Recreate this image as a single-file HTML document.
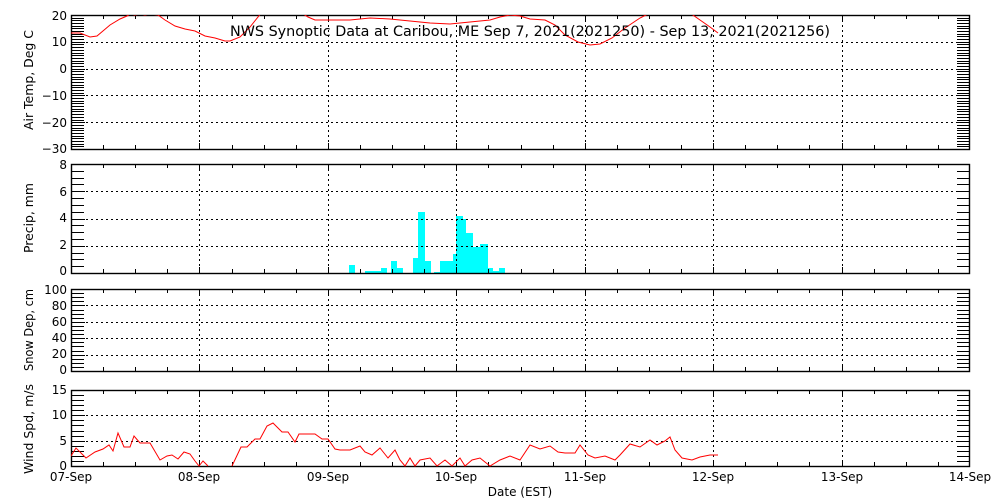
<!DOCTYPE html>
<html><head><meta charset="utf-8"><style>
html,body{margin:0;padding:0;background:#fff;}
svg{display:block;font-family:"DejaVu Sans","Liberation Sans",sans-serif;}
text{font-size:12px;fill:#000;}
</style></head><body>
<svg id="s" width="1000" height="500" xmlns="http://www.w3.org/2000/svg">
<g id="g"></g>
<text x="230" y="36" style="font-size:14px" textLength="600" lengthAdjust="spacingAndGlyphs">NWS Synoptic Data at Caribou, ME   Sep  7, 2021(2021250) - Sep 13, 2021(2021256)</text>
<g text-anchor="end">
<text x="67" y="20">20</text><text x="67" y="46">10</text><text x="67" y="73">0</text><text x="67" y="100">−10</text><text x="67" y="127">−20</text><text x="67" y="153">−30</text>
<text x="67" y="169">8</text><text x="67" y="196">6</text><text x="67" y="222">4</text><text x="67" y="249">2</text><text x="67" y="275">0</text>
<text x="67" y="294">100</text><text x="67" y="310">80</text><text x="67" y="326">60</text><text x="67" y="342">40</text><text x="67" y="358">20</text><text x="67" y="374">0</text>
<text x="67" y="394">15</text><text x="67" y="419">10</text><text x="67" y="445">5</text><text x="67" y="470">0</text>
</g>
<g text-anchor="middle">
<text x="71" y="481">07-Sep</text><text x="199" y="481">08-Sep</text><text x="328" y="481">09-Sep</text><text x="456" y="481">10-Sep</text><text x="585" y="481">11-Sep</text><text x="713" y="481">12-Sep</text><text x="842" y="481">13-Sep</text><text x="970" y="481">14-Sep</text>
<text x="520" y="496">Date (EST)</text>
</g>
<text transform="translate(33,130) rotate(-90)" textLength="100" lengthAdjust="spacingAndGlyphs">Air Temp, Deg C</text>
<text transform="translate(33,253) rotate(-90)" textLength="70" lengthAdjust="spacingAndGlyphs">Precip, mm</text>
<text transform="translate(33,371) rotate(-90)" textLength="82" lengthAdjust="spacingAndGlyphs">Snow Dep, cm</text>
<text transform="translate(33,474) rotate(-90)" textLength="90" lengthAdjust="spacingAndGlyphs">Wind Spd, m/s</text>
</svg>
<script>
var g=document.getElementById('g'),h='';
var X0=71,X1=970,D=(X1-X0)/7;
function L(x1,y1,x2,y2,st){h+='<line x1="'+x1+'" y1="'+y1+'" x2="'+x2+'" y2="'+y2+'" stroke="#000" stroke-width="1" '+(st||'')+'/>';}
var P=[[15,149,50,10],[164,273,16,4],[289,371,20,5],[390,466,15,5]];
var maj=[[10,50],[2,8],[20,100],[5,15]];
var bars=[[349,355,265],[365,381,271],[381,387,268],[391,397,261],[397,403,268],[413,418,258],[418,425,212],[425,431,261],[434,440,272],[440,453,261],[453,457,254],[456,463,216],[463,466,219],[466,473,233],[473,480,247],[480,488,244],[488,493,268],[493,499,271],[499,505,268]];
bars.forEach(function(b){h+='<rect x="'+b[0]+'" y="'+b[2]+'" width="'+(b[1]-b[0])+'" height="'+(273-b[2])+'" fill="#00ffff"/>';});
P.forEach(function(p,i){
 var t=p[0],b=p[1],n=p[2];
 for(var d=1;d<7;d++){var x=Math.round(X0+d*D)+.5;L(x,t,x,b,'stroke-dasharray="2,3"');}
 var mj=maj[i][0],tot=maj[i][1];
 for(var v=mj;v<tot;v+=mj){var y=Math.round(b-(b-t)*v/tot)+.5;L(X0,y,X1,y,'stroke-dasharray="2,3"');L(X0,y,X0+14,y);L(X1-14,y,X1,y);}
 for(var k=1;k<n;k++){var y=Math.round(b-(b-t)*k/n)+.5;L(X0,y,X0+13,y);L(X1-13,y,X1,y);}
 for(var q=1;q<28;q++){var x=Math.round(X0+q*D/4)+.5;var len=(q%4==0)?6:4;L(x,t,x,t+len);L(x,b,x,b-len);}
 h+='<rect x="'+(X0+.5)+'" y="'+(t+.5)+'" width="'+(X1-X0-1)+'" height="'+(b-t)+'" fill="none" stroke="#000" stroke-width="1.4"/>';
});
var temp=[[71,33],[80,33],[90,37],[97,36],[110,25],[120,19],[127,16],[130,14],[135,15],[140,14],[145,15],[150,14],[158,15],[165,20],[175,26],[185,29],[195,31],[205,36],[215,38],[225,41],[230,41],[240,37],[250,27],[262,12],[300,12],[308,17],[315,20],[330,20],[350,20],[370,18],[390,19],[410,21],[430,23],[450,24],[470,22],[490,20],[500,17],[510,15],[520,16],[530,19],[545,20],[555,25],[565,35],[578,42],[590,45],[600,44],[612,38],[625,28],[640,18],[652,12],[660,10],[680,10],[690,13],[700,20],[710,27],[718,33]];
var wind1=[[71,456],[76,448],[86,458],[95,452],[103,449],[109,445],[113,451],[118,433],[124,447],[130,447],[134,436],[140,443],[150,443],[160,460],[167,456],[172,455],[178,459],[184,452],[190,454],[195,461],[199,466],[203,461],[208,466]];
var wind2=[[232,466],[241,447],[247,447],[255,439],[260,439],[267,426],[273,423],[282,432],[288,432],[295,442],[299,434],[315,434],[322,439],[328,439],[335,449],[340,450],[350,450],[360,446],[365,452],[372,455],[380,448],[388,458],[395,450],[400,460],[405,466],[410,458],[415,466],[420,460],[430,458],[437,466],[445,460],[452,466],[460,458],[465,466],[472,460],[480,458],[490,466],[500,460],[510,456],[520,460],[530,445],[540,449],[550,446],[558,452],[565,453],[575,453],[580,445],[588,455],[595,458],[605,456],[615,460],[620,455],[630,444],[640,447],[650,440],[657,445],[665,441],[670,437],[675,450],[682,458],[692,460],[700,457],[710,455],[718,455]];
function pl(a,clip){return '<polyline clip-path="url(#'+clip+')" fill="none" stroke="#ff0000" stroke-width="1" points="'+a.map(function(p){return p.join(',')}).join(' ')+'"/>';}
h='<defs><clipPath id="c1"><rect x="71" y="15" width="899" height="134"/></clipPath><clipPath id="c4"><rect x="71" y="388" width="899" height="79"/></clipPath></defs>'+h;
h+=pl(temp,'c1')+pl(wind1,'c4')+pl(wind2,'c4');
g.innerHTML=h;
</script>
</body></html>
